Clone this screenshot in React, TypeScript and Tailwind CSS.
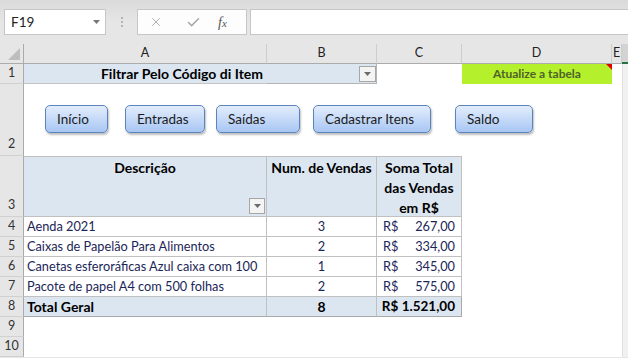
import { X, Check } from "lucide-react"

const cols = ["A", "B", "C", "D", "E"]

const rows = [
  { n: 4, desc: "Aenda 2021", qtd: "3", val: "267,00" },
  { n: 5, desc: "Caixas de Papelão Para Alimentos", qtd: "2", val: "334,00" },
  { n: 6, desc: "Canetas esferoráficas Azul caixa com 100", qtd: "1", val: "345,00" },
  { n: 7, desc: "Pacote de papel A4 com 500 folhas", qtd: "2", val: "575,00" },
]

function RowHead({ n, tall }: { n: number; tall?: boolean }) {
  return (
    <div
      className={`flex justify-center border-r border-b border-[#ababab] border-b-[#d0d0d0] bg-[#e6e6e6] text-[12.5px] text-[#333] ${
        tall ? "items-end pb-[1px]" : "items-center"
      }`}
    >
      {n}
    </div>
  )
}

function DropArrow({ className }: { className: string }) {
  return (
    <div className={`absolute flex items-center justify-center border border-[#a6a6a6] bg-[#f4f4f4] ${className}`}>
      <svg width="7" height="4" viewBox="0 0 7 4">
        <path d="M0 0h7L3.5 4z" fill="#6b6b6b" />
      </svg>
    </div>
  )
}

function SheetButton({ label, className }: { label: string; className: string }) {
  return (
    <div
      className={`flex h-[28px] items-center rounded-[5px] border border-[#5b84bd] bg-gradient-to-b from-[#e3edfc] to-[#a8c6f3] pl-[11px] pt-[1px] text-[13.5px] text-[#1b1b1b] shadow-[1px_2px_2px_rgba(0,0,0,0.25)] ${className}`}
    >
      {label}
    </div>
  )
}

export default function App() {
  return (
    <div className="h-[358px] w-[628px] overflow-hidden bg-[#e6e6e6] font-['Lato',sans-serif]">
      {/* barra de fórmulas */}
      <div className="flex h-[44px] items-start bg-gradient-to-b from-[#dadada] via-[#e6e6e6] to-[#e6e6e6] pl-[4px] pt-[9px]">
        <div className="flex h-[26px] w-[102px] items-center justify-between border border-[#c6c6c6] bg-white pl-[6px] pr-[5px] text-[13.5px] text-[#222]">
          <span>F19</span>
          <svg width="7" height="4" viewBox="0 0 7 4">
            <path d="M0 0h7L3.5 4z" fill="#777" />
          </svg>
        </div>
        <div className="flex w-[31px] flex-col items-center gap-[2px] pt-[8px]">
          <span className="h-[2px] w-[2px] bg-[#b4b4b4]" />
          <span className="h-[2px] w-[2px] bg-[#b4b4b4]" />
          <span className="h-[2px] w-[2px] bg-[#b4b4b4]" />
        </div>
        <div className="flex h-[26px] w-[110px] items-center border border-[#c6c6c6] bg-[#fdfdfd] pl-[11px]">
          <X className="h-[14px] w-[14px] text-[#a8a8a8]" strokeWidth={1.6} />
          <Check className="ml-[23px] h-[15px] w-[15px] text-[#a8a8a8]" strokeWidth={2.4} />
          <span className="ml-[17px] font-['Liberation_Serif',serif] text-[14px] italic text-[#555]">
            f<span className="text-[11px]">x</span>
          </span>
        </div>
        <div className="ml-[3px] h-[26px] flex-1 border border-r-0 border-[#c6c6c6] bg-white" />
      </div>

      {/* planilha */}
      <div className="grid grid-cols-[24px_243px_110px_85px_150px_10px_6px] grid-rows-[20px_20px_72px_61px_repeat(7,20px)] bg-white text-[12.75px]">
        {/* cabeçalho de colunas */}
        <div className="relative border-r border-b border-[#ababab] bg-[#e6e6e6]">
          <svg className="absolute bottom-[3px] right-[3px]" width="12" height="12" viewBox="0 0 12 12">
            <path d="M12 0V12H0z" fill="#bdbdbd" />
          </svg>
        </div>
        {cols.map((c) => (
          <div
            key={c}
            className="flex items-center justify-center border-r border-b border-[#ababab] border-r-[#cdcdcd] bg-[#e6e6e6] text-[12.5px] text-[#222]"
          >
            {c}
          </div>
        ))}
        <div className="border-b-2 border-[#217346] bg-[#d3d3d3]" />

        {/* linha 1 */}
        <RowHead n={1} />
        <div className="flex items-center justify-end border-b border-[#c4c4c4] bg-[#dce6f1] pr-[4px] text-[14px] font-bold text-black">
          Filtrar Pelo Código di Item
        </div>
        <div className="relative border-r border-b border-[#b4b4b4] bg-[#dce6f1]">
          <DropArrow className="right-[0px] top-[2px] h-[16px] w-[17px]" />
        </div>
        <div />
        <div className="relative flex items-center justify-center bg-[#b4f02c] text-[12px] font-bold text-[#4f6228]">
          Atualize a tabela
          <svg className="absolute right-0 top-0" width="6" height="6" viewBox="0 0 6 6">
            <path d="M0 0h6v6z" fill="#e00000" />
          </svg>
        </div>
        <div />
        <div className="border-l border-[#e0e0e0] bg-[#f1f1f1]" />

        {/* linha 2 - botões */}
        <RowHead n={2} tall />
        <div className="col-span-5 flex items-start pl-[21px] pt-[21px]">
          <SheetButton label="Início" className="w-[63px]" />
          <SheetButton label="Entradas" className="ml-[17px] w-[80px]" />
          <SheetButton label="Saídas" className="ml-[11px] w-[84px]" />
          <SheetButton label="Cadastrar Itens" className="ml-[13px] w-[118px]" />
          <SheetButton label="Saldo" className="ml-[24px] w-[78px]" />
        </div>
        <div className="border-l border-[#e0e0e0] bg-[#f1f1f1]" />

        {/* linha 3 - cabeçalho da tabela */}
        <RowHead n={3} tall />
        <div className="relative border-t border-r border-b border-[#c0c0c0] bg-[#dce6f1] pt-[1px] text-center text-[14px] font-bold leading-[20px] text-black">
          Descrição
          <DropArrow className="bottom-[2px] right-[1px] h-[16px] w-[16px]" />
        </div>
        <div className="border-t border-r border-b border-[#c0c0c0] bg-[#dce6f1] pt-[1px] text-center text-[14px] font-bold leading-[20px] text-black">
          Num. de Vendas
        </div>
        <div className="border-t border-r border-b border-[#c0c0c0] bg-[#dce6f1] pt-[1px] text-center text-[14px] font-bold leading-[20px] text-black">
          Soma Total
          <br />
          das Vendas
          <br />
          em R$
        </div>
        <div />
        <div />
        <div className="border-l border-[#e0e0e0] bg-[#f1f1f1]" />

        {/* linhas de dados */}
        {rows.map((r) => (
          <div key={r.n} className="contents">
            <RowHead n={r.n} />
            <div className="flex items-center overflow-hidden whitespace-nowrap border-r border-b border-[#c0c0c0] pl-[3px] text-[#1b2657]">
              {r.desc}
            </div>
            <div className="flex items-center justify-center border-r border-b border-[#c0c0c0] text-[#1b2657]">
              {r.qtd}
            </div>
            <div className="flex items-center justify-between border-r border-b border-[#c0c0c0] pl-[6px] pr-[6px] text-[#1b2657]">
              <span>R$</span>
              <span>{r.val}</span>
            </div>
            <div />
            <div />
            <div className="border-l border-[#e0e0e0] bg-[#f1f1f1]" />
          </div>
        ))}

        {/* total geral */}
        <RowHead n={8} />
        <div className="flex items-center border-r border-b border-[#a9a9a9] border-r-[#c0c0c0] bg-[#dce6f1] pl-[3px] text-[14px] font-bold text-black">
          Total Geral
        </div>
        <div className="flex items-center justify-center border-r border-b border-[#a9a9a9] border-r-[#c0c0c0] bg-[#dce6f1] text-[14px] font-bold text-black">
          8
        </div>
        <div className="flex items-center justify-end border-r border-b border-[#a9a9a9] bg-[#dce6f1] pr-[6px] text-[13.5px] font-bold text-black">
          R$ 1.521,00
        </div>
        <div />
        <div />
        <div className="border-l border-[#e0e0e0] bg-[#f1f1f1]" />

        {/* linhas vazias */}
        {[9, 10].map((n) => (
          <div key={n} className="contents">
            <RowHead n={n} />
            <div className="col-span-5" />
            <div className="border-l border-[#e0e0e0] bg-[#f1f1f1]" />
          </div>
        ))}
      </div>
    </div>
  )
}
